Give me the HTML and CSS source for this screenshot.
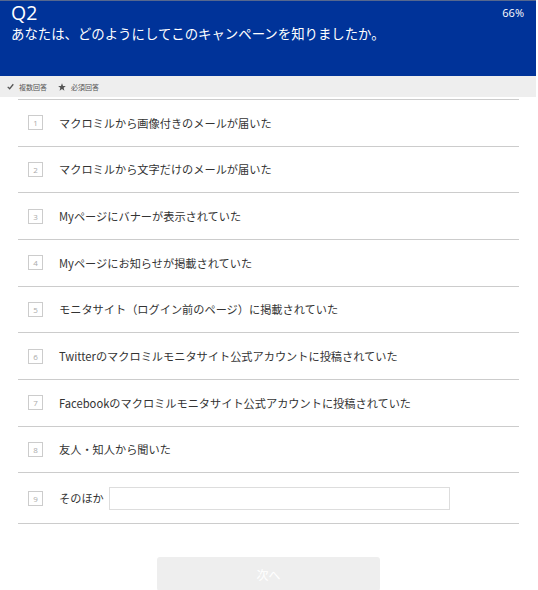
FILE: index.html
```html
<!DOCTYPE html>
<html lang="ja">
<head>
<meta charset="utf-8">
<link rel="stylesheet" href="styles.css">
</head>
<body>
<div class="page">
  <header class="q-head">
    <div class="q-top">
      <div class="q-no">Q2</div>
      <div class="q-pct">66%</div>
    </div>
    <div class="q-text">あなたは、どのようにしてこのキャンペーンを知りましたか。</div>
  </header>
  <div class="q-meta">
    <span class="meta-item"><svg class="ico" viewBox="0 0 10 10" width="7" height="7"><path d="M1 5.5 L3.8 8.2 L9 1.8" fill="none" stroke="#555" stroke-width="1.8"/></svg>複数回答</span>
    <span class="meta-item"><svg class="ico" viewBox="0 0 10 10" width="8" height="8"><path d="M5 0.3 L6.3 3.6 L9.8 3.8 L7.1 6 L8 9.6 L5 7.6 L2 9.6 L2.9 6 L0.2 3.8 L3.7 3.6 Z" fill="#555"/></svg>必須回答</span>
  </div>
  <ul class="choices">
    <li class="choice"><span class="num">1</span><span class="label">マクロミルから画像付きのメールが届いた</span></li>
    <li class="choice"><span class="num">2</span><span class="label">マクロミルから文字だけのメールが届いた</span></li>
    <li class="choice"><span class="num">3</span><span class="label">Myページにバナーが表示されていた</span></li>
    <li class="choice"><span class="num">4</span><span class="label">Myページにお知らせが掲載されていた</span></li>
    <li class="choice"><span class="num">5</span><span class="label">モニタサイト（ログイン前のページ）に掲載されていた</span></li>
    <li class="choice"><span class="num">6</span><span class="label">Twitterのマクロミルモニタサイト公式アカウントに投稿されていた</span></li>
    <li class="choice"><span class="num">7</span><span class="label">Facebookのマクロミルモニタサイト公式アカウントに投稿されていた</span></li>
    <li class="choice"><span class="num">8</span><span class="label">友人・知人から聞いた</span></li>
    <li class="choice choice-other"><span class="num">9</span><span class="label">そのほか</span><input class="other-input" type="text"></li>
  </ul>
  <div class="actions">
    <button class="next-btn" type="button">次へ</button>
  </div>
</div>
</body>
</html>
```
FILE: styles.css
```css
html, body {
  margin: 0;
  padding: 0;
  background: #fff;
}
body {
  font-family: "Noto Sans CJK JP", "Open Sans", sans-serif;
  color: #333;
}
.page {
  width: 536px;
}
.q-head {
  background: #003399;
  border-top: 1px solid #56688f;
  color: #fff;
  height: 75px;
  padding: 0 12px 0 11px;
  box-sizing: content-box;
}
.q-top {
  display: flex;
  justify-content: space-between;
  align-items: flex-start;
  height: 23px;
}
.q-no {
  font-family: "Open Sans", "Noto Sans", sans-serif;
  font-size: 19.5px;
  line-height: 23px;
}
.q-pct {
  font-family: "Open Sans", "Noto Sans", sans-serif;
  font-size: 11px;
  line-height: 14px;
  padding-top: 5px;
}
.q-text {
  font-size: 13.4px;
  line-height: 19px;
}
.q-meta {
  background: #eeeeee;
  height: 21px;
  display: flex;
  align-items: center;
  gap: 11px;
  padding-left: 7px;
  font-size: 7px;
  color: #555;
}
.meta-item {
  display: flex;
  align-items: center;
  gap: 5px;
}
.choices {
  list-style: none;
  margin: 2px 0 0 18px;
  padding: 0;
  width: 501px;
  border-top: 1px solid #cccccc;
}
.choice {
  display: flex;
  align-items: center;
  height: 45.67px;
  border-bottom: 1px solid #cccccc;
  padding-left: 10px;
  font-size: 11.2px;
}
.choice-other {
  height: 50px;
}
.num {
  width: 13px;
  height: 13px;
  border: 1px solid #cccccc;
  font-family: "Open Sans", sans-serif;
  font-size: 8px;
  color: #aaa;
  display: flex;
  align-items: center;
  justify-content: center;
  flex: none;
}
.label {
  margin-left: 16px;
  color: #333;
}
.other-input {
  margin: 0 0 0 5px;
  width: 341px;
  height: 23px;
  box-sizing: border-box;
  border: 1px solid #dddddd;
  outline: none;
  padding: 0 4px;
}
.actions {
  display: flex;
  padding: 33px 0 0 157px;
}
.next-btn {
  width: 223px;
  height: 34px;
  background: #eeeeee;
  border: none;
  border-radius: 3px;
  color: #fff;
  font-family: "Noto Sans CJK JP", sans-serif;
  font-size: 12px;
}
```
